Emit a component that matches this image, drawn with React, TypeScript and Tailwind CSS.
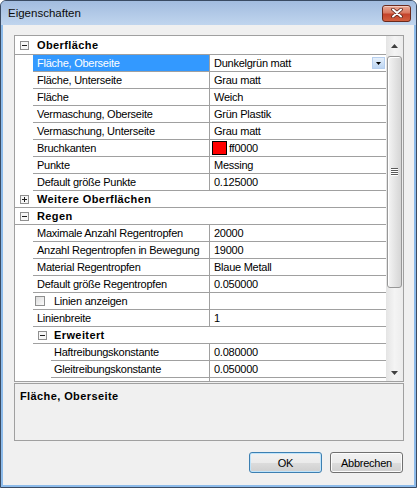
import React from "react";

const L = "border-[#a0a0a0]";

function Box({ plus }: { plus?: boolean }) {
  return (
    <svg width="9" height="9" viewBox="0 0 9 9" className="block">
      <rect x="0.5" y="0.5" width="8" height="8" fill="#f6f6f6" stroke="#8f8f8f" />
      <path d="M2 4.5h5" stroke="#1e1e1e" strokeWidth="1" />
      {plus && <path d="M4.5 2v5" stroke="#1e1e1e" strokeWidth="1" />}
    </svg>
  );
}

function Cat({ t, plus, first }: { t: string; plus?: boolean; first?: boolean }) {
  return (
    <div className={`flex ${first ? "h-[19px]" : "h-[17px]"} border-b ${L}`}>
      <div className="w-[18px] shrink-0 flex items-center justify-center pl-[1px]">
        <Box plus={plus} />
      </div>
      <div className="pl-[4px] flex items-center font-bold tracking-[0.4px] whitespace-nowrap">{t}</div>
    </div>
  );
}

function Item({ l, v, sel }: { l: React.ReactNode; v?: React.ReactNode; sel?: boolean }) {
  return (
    <div className="flex h-[17px]">
      <div className="w-[18px] shrink-0" />
      <div className={`flex flex-1 border-b ${L}`}>
        <div
          className={`w-[177px] shrink-0 border-r ${L} pl-[4px] flex items-center whitespace-nowrap overflow-hidden ${
            sel ? "bg-[#3399ff] text-white" : ""
          }`}
        >
          {l}
        </div>
        <div className="flex-1 pl-[4px] flex items-center whitespace-nowrap overflow-hidden">{v}</div>
      </div>
    </div>
  );
}

function Sub({ t }: { t: string }) {
  return (
    <div className="flex h-[17px]">
      <div className="w-[18px] shrink-0" />
      <div className={`flex flex-1 border-b ${L} items-center`}>
        <div className="w-[18px] shrink-0 flex items-center justify-center pl-[1px]">
          <Box />
        </div>
        <div className="pl-[3px] font-bold tracking-[0.4px]">{t}</div>
      </div>
    </div>
  );
}

function SubItem({ l, v }: { l: string; v: string }) {
  return (
    <div className="flex h-[17px]">
      <div className="w-[36px] shrink-0" />
      <div className={`flex flex-1 border-b ${L}`}>
        <div className={`w-[159px] shrink-0 border-r ${L} pl-[3px] flex items-center whitespace-nowrap`}>{l}</div>
        <div className="flex-1 pl-[4px] flex items-center">{v}</div>
      </div>
    </div>
  );
}

function Tri({ down }: { down?: boolean }) {
  return (
    <svg width="7" height="4" viewBox="0 0 7 4" className="block">
      <polygon points={down ? "0,0 7,0 3.5,4" : "0,4 7,4 3.5,0"} fill="#404040" />
    </svg>
  );
}

export default function App() {
  return (
    <div className="w-[417px] h-[488px] font-['Liberation_Sans',Arial,sans-serif] text-[11px] leading-[14px] text-black tracking-[-0.25px]">
      <div className="w-full h-full flex flex-col border border-[#3a4b63] rounded-t-[6px] bg-[#8dbbea] overflow-hidden">
        {/* title bar */}
        <div className="h-[24px] shrink-0 flex items-center justify-between pl-[7px] pr-[5px] bg-gradient-to-b from-[#a2bcdf] to-[#c0d5ee]">
          <span className="text-[11.5px] tracking-[0px] text-[#0c0c0c]">Eigenschaften</span>
          <div className="w-[29px] h-[17px] rounded-[3px] border border-[#6b2a1d] bg-[linear-gradient(to_bottom,#eaa894_0%,#d97a62_45%,#c4432b_55%,#d2603f_100%)] shadow-[inset_0_1px_0_rgba(255,255,255,0.45)] flex items-center justify-center">
            <svg width="12" height="10" viewBox="0 0 12 10" className="block">
              <path d="M2 1.5 L10 8.5 M10 1.5 L2 8.5" stroke="#5b2418" strokeWidth="3.6" strokeLinecap="round" />
              <path d="M2 1.5 L10 8.5 M10 1.5 L2 8.5" stroke="#ffffff" strokeWidth="2" strokeLinecap="round" />
            </svg>
          </div>
        </div>

        {/* client */}
        <div className="flex-1 mx-[2px] mb-[2px] bg-[#f0f0f0] flex flex-col pl-[11px] pt-[10px]">
          {/* property grid */}
          <div className={`w-[390px] h-[347px] border ${L} bg-white flex`}>
            <div className="w-[371px] flex flex-col overflow-hidden">
              <Cat t="Oberfläche" first />
              <Item
                l="Fläche, Oberseite"
                sel
                v={
                  <div className="flex items-center w-full">
                    <span className="flex-1">Dunkelgrün matt</span>
                    <div className="w-[13px] h-[12px] mr-[1px] bg-gradient-to-b from-[#e6f0fb] to-[#bcd5f2] border border-[#b7cfee] flex items-center justify-center">
                      <svg width="5" height="3" viewBox="0 0 5 3" className="block">
                        <polygon points="0,0 5,0 2.5,3" fill="#000" />
                      </svg>
                    </div>
                  </div>
                }
              />
              <Item l="Fläche, Unterseite" v="Grau matt" />
              <Item l="Fläche" v="Weich" />
              <Item l="Vermaschung, Oberseite" v="Grün Plastik" />
              <Item l="Vermaschung, Unterseite" v="Grau matt" />
              <Item
                l="Bruchkanten"
                v={
                  <div className="flex items-center -ml-[2px]">
                    <div className="w-[15px] h-[14px] border border-black bg-[#ff0000]" />
                    <span className="ml-[2px]">ff0000</span>
                  </div>
                }
              />
              <Item l="Punkte" v="Messing" />
              <Item l="Default größe Punkte" v="0.125000" />
              <Cat t="Weitere Oberflächen" plus />
              <Cat t="Regen" />
              <Item l="Maximale Anzahl Regentropfen" v="20000" />
              <Item l="Anzahl Regentropfen in Bewegung" v="19000" />
              <Item l="Material Regentropfen" v="Blaue Metall" />
              <Item l="Default größe Regentropfen" v="0.050000" />
              <Item
                l={
                  <div className="flex items-center -ml-[2px]">
                    <div className="w-[10px] h-[10px] border border-[#8e8f8f] bg-gradient-to-br from-[#dcdcdc] to-[#fbfbfb]" />
                    <span className="ml-[9px]">Linien anzeigen</span>
                  </div>
                }
                v=""
              />
              <Item l="Linienbreite" v="1" />
              <Sub t="Erweitert" />
              <SubItem l="Haftreibungskonstante" v="0.080000" />
              <SubItem l="Gleitreibungskonstante" v="0.050000" />
              <div className="flex h-[3px]">
                <div className="w-[18px] shrink-0" />
                <div className={`w-[177px] border-r ${L}`} />
              </div>
            </div>
            {/* scrollbar */}
            <div className="w-[17px] flex flex-col bg-gradient-to-r from-[#e4e4e4] via-[#f4f4f4] to-[#ececec]">
              <div className="h-[17px] flex items-center justify-center pt-[2px]">
                <Tri />
              </div>
              <div className="flex-1 pt-[3px] px-[1px]">
                <div className="h-[232px] rounded-[3px] border border-[#979797] bg-gradient-to-r from-[#f5f5f5] to-[#d5d5d5] flex items-center justify-center shadow-[inset_1px_1px_0_#ffffff]">
                  <svg width="7" height="8" viewBox="0 0 7 8" className="block">
                    <path d="M0 0.5h7M0 2.5h7M0 4.5h7M0 6.5h7" stroke="#5a5a5a" strokeWidth="1" />
                    <path d="M0 1.5h7M0 3.5h7M0 5.5h7M0 7.5h7" stroke="#ffffff" strokeWidth="1" />
                  </svg>
                </div>
              </div>
              <div className="h-[17px] flex items-center justify-center">
                <Tri down />
              </div>
            </div>
          </div>

          {/* description */}
          <div className={`mt-[1px] w-[390px] h-[58px] border ${L} bg-[#f0f0f0] pl-[5px] pt-[5px] font-bold tracking-[0.4px]`}>
            Fläche, Oberseite
          </div>

          {/* buttons */}
          <div className="mt-[11px] w-[389px] flex justify-end gap-[8px]">
            <div className="w-[73px] h-[21px] rounded-[3px] border border-[#3c7fb1] bg-[linear-gradient(to_bottom,#f2f2f2_0%,#ebebeb_50%,#dddddd_50%,#cfcfcf_100%)] shadow-[inset_0_0_0_1px_#bfe4fb] flex items-center justify-center">
              OK
            </div>
            <div className="w-[73px] h-[21px] rounded-[3px] border border-[#707070] bg-[linear-gradient(to_bottom,#f2f2f2_0%,#ebebeb_50%,#dddddd_50%,#cfcfcf_100%)] shadow-[inset_0_0_0_1px_#fcfcfc] flex items-center justify-center">
              Abbrechen
            </div>
          </div>
        </div>
      </div>
    </div>
  );
}
